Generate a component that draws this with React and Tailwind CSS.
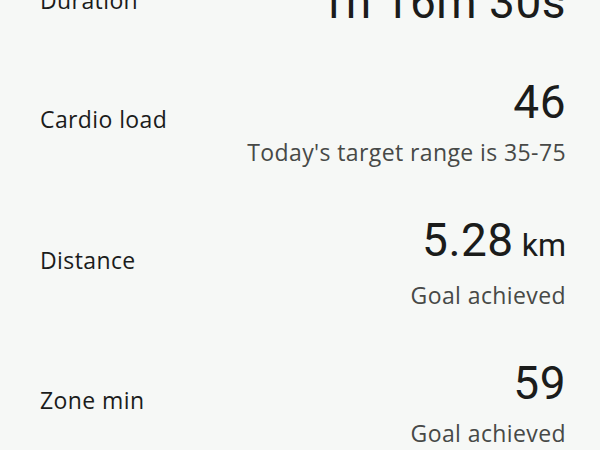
export default function App() {
  const rows = [
    { label: "Duration", value: "1h 16m 30s" },
    { label: "Cardio load", value: "46", sub: "Today's target range is 35-75" },
    { label: "Distance", value: "5.28", unit: "km", sub: "Goal achieved" },
    { label: "Zone min", value: "59", sub: "Goal achieved" },
  ];
  return (
    <div
      className="w-[600px] h-[450px] overflow-hidden bg-[#f6f8f6] text-[#1b1c1b]"
      style={{ fontFamily: "Roboto, 'Noto Sans', sans-serif" }}
    >
      <div className="flex flex-col gap-12 pl-10 pr-[34px] mt-[-24px]">
        {rows.map((r) => (
          <div key={r.label} className="flex items-center justify-between">
            <div className="text-[23px] leading-[28px] tracking-[0.4px] pb-[4px] font-['Open_Sans',sans-serif]">{r.label}</div>
            <div className="flex flex-col items-end">
              <div className="text-[46px] leading-[52px] tracking-[0.5px]">
                {r.value}
                {r.unit && <span className="text-[32px] ml-2 tracking-normal">{r.unit}</span>}
              </div>
              {r.sub && (
                <div className="mt-[10px] text-[23px] leading-[28px] tracking-[0.4px] text-[#474947] font-['Open_Sans',sans-serif]">{r.sub}</div>
              )}
            </div>
          </div>
        ))}
      </div>
    </div>
  );
}
